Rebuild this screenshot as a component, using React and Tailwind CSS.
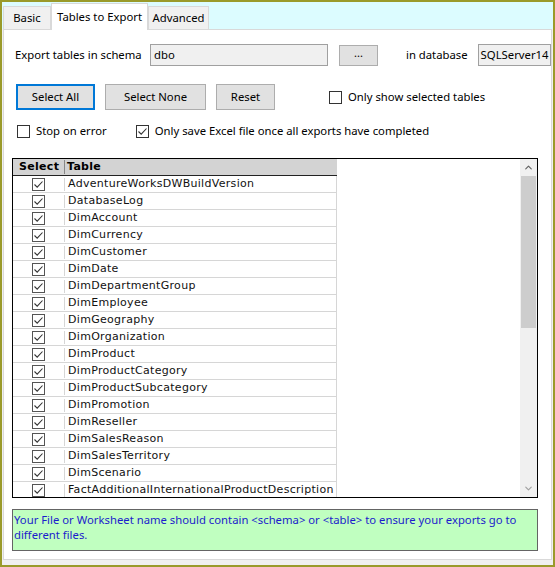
import { ChevronUp, ChevronDown } from "lucide-react";

const TABLES = [
  "AdventureWorksDWBuildVersion",
  "DatabaseLog",
  "DimAccount",
  "DimCurrency",
  "DimCustomer",
  "DimDate",
  "DimDepartmentGroup",
  "DimEmployee",
  "DimGeography",
  "DimOrganization",
  "DimProduct",
  "DimProductCategory",
  "DimProductSubcategory",
  "DimPromotion",
  "DimReseller",
  "DimSalesReason",
  "DimSalesTerritory",
  "DimScenario",
  "FactAdditionalInternationalProductDescription",
];

function Check({ checked, dark }) {
  return (
    <span
      className={`flex h-[13px] w-[13px] shrink-0 items-center justify-center border bg-white ${
        dark ? "border-[#555]" : "border-[#333]"
      }`}
    >
      {checked && (
        <svg width="11" height="11" viewBox="0 0 11 11" fill="none">
          <path d="M1.5 5.5 L4.2 8.2 L9.5 2.5" stroke="#333" strokeWidth="1.1" />
        </svg>
      )}
    </span>
  );
}

function Button({ children, className, focused }) {
  return (
    <div
      className={`flex items-center justify-center bg-[#e1e1e1] text-black ${
        focused ? "border-2 border-[#0078d7]" : "border border-[#adadad]"
      } ${className}`}
    >
      {children}
    </div>
  );
}

export default function App() {
  return (
    <div
      className="flex h-[567px] w-[555px] flex-col whitespace-nowrap border-x-2 border-t-2 border-b-2 border-[#9a9a2a] bg-[#f0f0f0] text-[11.3px] text-black"
      style={{ fontFamily: "'Noto Sans', 'Open Sans', sans-serif" }}
    >
      {/* tabs */}
      <div className="flex h-[27px] items-end bg-[#dcfcff] pl-[1px]">
        <div className="flex h-[23px] w-[48px] items-center justify-center border border-b-0 border-[#d9d9d9] bg-[#f0f0f0]">
          Basic
        </div>
        <div className="z-10 -mb-[1px] flex h-[27px] w-[97px] items-center justify-center border border-b-0 border-[#d9d9d9] bg-white">
          Tables to Export
        </div>
        <div className="flex h-[23px] w-[61px] items-center justify-center border border-b-0 border-[#d9d9d9] bg-[#f0f0f0]">
          Advanced
        </div>
      </div>

      {/* panel */}
      <div className="mr-[1px] mb-[5px] ml-[1px] flex flex-1 flex-col border border-[#d9d9d9] bg-white">
        <div className="mt-[14px] flex h-[22px] items-center">
          <span className="ml-[11px] w-[135px]">Export tables in schema</span>
          <div className="flex h-[22px] w-[178px] items-center border border-[#a0a0a0] bg-[#f0f0f0] pl-[3px]">
            dbo
          </div>
          <Button className="ml-[11px] h-[21px] w-[39px] pb-[4px] text-[11px]">...</Button>
          <span className="ml-[28px]">in database</span>
          <div className="ml-[10px] flex h-[22px] flex-1 items-center border border-[#a0a0a0] bg-[#f0f0f0] pl-[2px]">
            SQLServer14
          </div>
        </div>

        <div className="mt-[18px] flex h-[26px] items-center">
          <Button focused className="ml-[12px] h-[26px] w-[79px]">
            Select All
          </Button>
          <Button className="ml-[10px] h-[26px] w-[101px]">Select None</Button>
          <Button className="ml-[10px] h-[26px] w-[59px]">Reset</Button>
          <div className="ml-[54px] flex items-center">
            <Check />
            <span className="ml-[6px]">Only show selected tables</span>
          </div>
        </div>

        <div className="mt-[15px] flex h-[13px] items-center">
          <div className="ml-[13px] flex items-center">
            <Check />
            <span className="ml-[6px]">Stop on error</span>
          </div>
          <div className="ml-[29px] flex items-center">
            <Check checked />
            <span className="ml-[6px]">Only save Excel file once all exports have completed</span>
          </div>
        </div>

        {/* grid */}
        <div
          className="mt-[20px] ml-[8px] flex h-[340px] w-[526px] border border-black bg-white text-[11px] tracking-[0.3px]"
          style={{ fontFamily: "'DejaVu Sans', Verdana, sans-serif" }}
        >
          <div className="flex-1 overflow-hidden">
            <div className="flex h-[17px] w-[324px] items-center border-b border-[#222] bg-[#d3d3d3] font-bold">
              <div className="w-[52px] border-r border-[#888] pl-[6px] leading-[14px]">Select</div>
              <div className="pl-[2px]">Table</div>
            </div>
            {TABLES.map((t) => (
              <div key={t} className="flex h-[17px] w-[324px] items-center border-b border-r border-[#d6d6d6]">
                <div className="flex w-[52px] justify-center border-r border-[#d6d6d6]">
                  <Check checked dark />
                </div>
                <div className="pl-[3px] text-[#111]">{t}</div>
              </div>
            ))}
          </div>
          <div className="flex w-[17px] flex-col bg-[#f0f0f0]">
            <div className="flex h-[17px] items-center justify-center">
              <ChevronUp size={11} strokeWidth={2.5} color="#606060" />
            </div>
            <div className="mx-[1px] h-[152px] bg-[#cdcdcd]" />
            <div className="flex-1" />
            <div className="flex h-[17px] items-center justify-center">
              <ChevronDown size={11} strokeWidth={2.5} color="#a0a0a0" />
            </div>
          </div>
        </div>

        {/* note */}
        <div className="mt-[11px] ml-[8px] h-[42px] w-[526px] border border-[#646464] bg-[#c0ffc0] px-[1px] pt-[2px] leading-[15px] text-[#1c1ccc]">
          Your File or Worksheet name should contain &lt;schema&gt; or &lt;table&gt; to ensure your exports go to
          <br />
          different files.
        </div>
      </div>
    </div>
  );
}
